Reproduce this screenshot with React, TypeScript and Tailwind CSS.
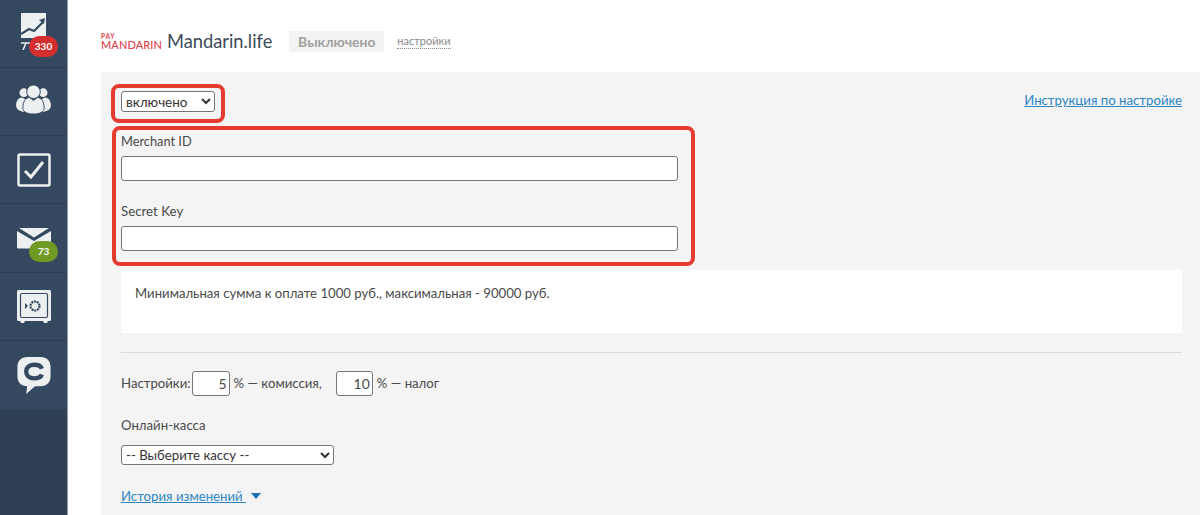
import React from "react";

function NavItem({ children, h = "h-[68px]", last }: { children: React.ReactNode; h?: string; last?: boolean }) {
  return (
    <div className={`relative ${h} flex items-center justify-center ${last ? "" : "border-b border-[#2c3e52]"}`}>
      {children}
    </div>
  );
}

function Badge({ text, color, cls }: { text: string; color: string; cls: string }) {
  return (
    <span className={`absolute ${cls} ${color} h-[21px] w-[29px] rounded-full flex items-center justify-center text-white text-[10px] font-bold`}>
      {text}
    </span>
  );
}

export default function App() {
  return (
    <div className="flex h-[515px] w-[1200px] overflow-hidden bg-white text-[#4a4a4a] font-['Lato','Roboto',sans-serif]">
      <aside className="w-[68px] h-full shrink-0 bg-[#2f4055] border-r border-[#8a9aaa]">
        <div className="bg-[#34495f]">
          <NavItem>
            <svg width="25" height="37" viewBox="0 0 25 37" className="mt-[-4px]">
              <path d="M0 0h25v25H0z" fill="#ecf0f1" />
              <path d="M0 21l8-5 5 2 9-9" fill="none" stroke="#34495f" strokeWidth="2.2" />
              <path d="M18 7l6-2-1 6z" fill="#34495f" />
              <path d="M0 30h9M5 30l-3 7" stroke="#ecf0f1" strokeWidth="1.5" fill="none" />
            </svg>
            <Badge text="330" color="bg-[#d32f2f]" cls="left-[29px] top-[36px]" />
          </NavItem>
          <NavItem>
            <svg width="35" height="30" viewBox="0 0 36 31" fill="#ecf0f1" className="mt-[-5px]">
              <circle cx="8" cy="9" r="4.5" />
              <circle cx="28" cy="9" r="4.5" />
              <path d="M0 22c0-5 3-8 6-8l4 2-2 13c-5-1-8-3-8-7zM36 22c0-5-3-8-6-8l-4 2 2 13c5-1 8-3 8-7z" />
              <circle cx="18" cy="8" r="7" stroke="#34495f" strokeWidth="1" />
              <path d="M7 25c0-7 3-11 7-11l4 3 4-3c4 0 7 4 7 11 0 4-5 6-11 6S7 29 7 25z" stroke="#34495f" strokeWidth="1" />
            </svg>
          </NavItem>
          <NavItem>
            <svg width="34" height="34" viewBox="0 0 34 34" fill="none">
              <rect x="1.5" y="1.5" width="31" height="31" rx="1.5" stroke="#ecf0f1" strokeWidth="2.5" />
              <path d="M8 18l6 6L26 9" stroke="#ecf0f1" strokeWidth="3" />
            </svg>
          </NavItem>
          <NavItem h="h-[69px]">
            <svg width="34" height="21" viewBox="0 0 34 21">
              <path d="M0 3l17 10L34 3v16a1.5 1.5 0 0 1-1.5 1.5h-31A1.5 1.5 0 0 1 0 19z" fill="#ecf0f1" />
              <path d="M2 0h30L17 9.500z" fill="#ecf0f1" />
            </svg>
            <Badge text="73" color="bg-[#6f9a24]" cls="left-[29px] top-[37px]" />
          </NavItem>
          <NavItem>
            <svg width="34" height="34" viewBox="0 0 34 34" fill="none">
              <rect x="0" y="0" width="34" height="31" rx="1.5" fill="#ecf0f1" />
              <path d="M3 31h5l-1 2H4zM26 31h5l-1 2h-3z" fill="#ecf0f1" />
              <rect x="3.500" y="3.500" width="27" height="24" rx="1.500" stroke="#34495f" strokeWidth="1.2" />
              <circle cx="18" cy="16" r="4.500" stroke="#34495f" strokeWidth="2.2" strokeDasharray="2 0.8" />
              <path d="M8 13l3 3-3 3z" fill="#34495f" />
            </svg>
          </NavItem>
          <NavItem last>
            <svg width="34" height="37" viewBox="0 0 34 38">
              <path d="M10 0h14c6 0 10 4 10 10v10c0 6-4 10-10 10h-6l-9 8 1-8c-6 0-10-4-10-10V10C0 4 4 0 10 0z" fill="#ecf0f1" />
              <path d="M25 12c-1-3-4-4-8-4-5 0-8 3-8 7s3 7 8 7c4 0 7-1 8-4" fill="none" stroke="#34495f" strokeWidth="4.500" />
            </svg>
          </NavItem>
        </div>
      </aside>

      <main className="flex-1 min-w-0 pl-[33px]">
        <header className="h-[72px] flex items-center pt-[11px]">
          <div className="flex flex-col text-[#e5404a] w-[66px]">
            <span className="text-[6.5px] font-bold leading-[6px] tracking-[0.8px]">PAY</span>
            <span className="text-[11px] font-medium tracking-[0.1px] leading-[10px]">MANDARIN</span>
          </div>
          <h1 className="text-[18.3px] text-[#3d4a5a] font-normal leading-none">Mandarin.life</h1>
          <span className="ml-[17px] h-[21px] w-[95px] bg-[#f3f3f3] flex items-center justify-center text-[14px] font-bold text-[#a0a0a0]">Выключено</span>
          <span className="ml-[13px] text-[11px] text-[#8a8a8a] border-b border-dotted border-[#8a8a8a] leading-[14px]">настройки</span>
        </header>

        <section className="bg-[#f4f4f4] h-[443px] pl-[10px] pt-[12px] text-[13.2px]">
          <div className="flex items-start justify-between pr-[18px]">
            <div className="w-[114px] h-[39px] border-4 border-[#e53a2f] rounded-[8px] pl-[6px] pt-[3px]">
              <select className="block w-[94px] h-[21px] bg-white border border-[#767676] rounded-[3px] text-[13.5px] text-[#333]">
                <option>включено</option>
              </select>
            </div>
            <a className="mt-[7px] text-[13.2px] text-[#2d86c4] underline">Инструкция по настройке</a>
          </div>

          <div className="mt-[3px] ml-[1px] w-[583px] h-[140px] border-4 border-[#e53a2f] rounded-[8px] pl-[5px] pt-[1px]">
            <div className="leading-[20px] text-[12.8px]">Merchant ID</div>
            <input className="block mt-[5px] w-[557px] h-[25px] bg-white border border-[#767676] rounded-[3px]" />
            <div className="mt-[20px] leading-[20px] text-[13.3px]">Secret Key</div>
            <input className="block mt-[5px] w-[557px] h-[25px] bg-white border border-[#767676] rounded-[3px]" />
          </div>

          <div className="ml-[10px] mr-[18px] mt-[4px] h-[63px] bg-white pl-[14px] pt-[13px] text-[13.15px] leading-[20px]">
            Минимальная сумма к оплате 1000 руб., максимальная - 90000 руб.
          </div>

          <div className="ml-[10px] mr-[18px] mt-[19px] border-t border-[#dcdcdc]" />

          <div className="ml-[10px] mt-[18px] flex items-center h-[25px]">
            <span>Настройки:</span>
            <input readOnly value="5" className="ml-[1px] w-[38px] h-[25px] bg-white border border-[#767676] rounded-[3px] text-right pr-[2px] text-[14px]" />
            <span className="ml-[4px]">% — комиссия,</span>
            <input readOnly value="10" className="ml-[14px] w-[37px] h-[25px] bg-white border border-[#767676] rounded-[3px] text-right pr-[2px] text-[14px]" />
            <span className="ml-[4px]">% — налог</span>
          </div>

          <div className="ml-[10px] mt-[19px] leading-[20px]">Онлайн-касса</div>
          <select className="ml-[10px] mt-[10px] block w-[213px] h-[20px] bg-white border border-[#767676] rounded-[3px] text-[13.2px] text-[#333]">
            <option>-- Выберите кассу --</option>
          </select>

          <div className="ml-[10px] mt-[21px] flex items-center">
            <a className="text-[#2d86c4] underline leading-[20px]">История изменений&nbsp;</a>
            <span className="ml-[5px] w-0 h-0 border-x-[5.5px] border-x-transparent border-t-[6px] border-t-[#1d6fb0]" />
          </div>
        </section>
      </main>
    </div>
  );
}
